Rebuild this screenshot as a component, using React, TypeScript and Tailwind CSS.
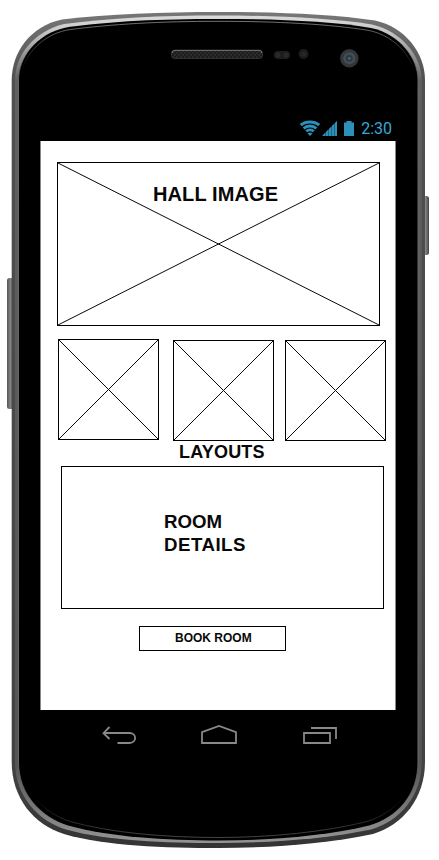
import React from "react";

const OUTER =
  "M11.7 80C11.7 53 30 26 62 19.5C110 14 160 12 219 12C275 12 330 14 375 20.5C405 27 425 53 425 80V762C425 798 403 825 373 834C325 844 270 848 219 848C165 848 105 846 64 834C34 825 11.7 798 11.7 762Z";
const RIM =
  "M15 80C15 55 34 31.5 64 24C110 18 160 15.5 219 15.5C275 15.5 330 18 372 24.5C401 31 421.7 56 421.7 80V762C421.7 796 400 821 371 829.5C325 839 270 843 219 843C165 843 108 841 66 829.5C38 821 15 796 15 762Z";
const FACE =
  "M18.5 80C18.5 58 36 34 66 27.5C112 21 160 19 219 19C275 19 330 21 371 28C400 34 418 59 418 80V762C418 794 398 817 369 825.5C325 836 270 840.5 219 840.5C165 840.5 110 837 68 825.5C41 817 18.5 794 18.5 762Z";

function PhoneBody() {
  return (
    <svg className="absolute inset-0" width="439" height="860" viewBox="0 0 439 860" fill="none" aria-hidden="true">
      <defs>
        <linearGradient id="shell" x1="0" y1="12" x2="0" y2="848" gradientUnits="userSpaceOnUse">
          <stop offset="0" stopColor="#777" />
          <stop offset="0.08" stopColor="#505050" />
          <stop offset="0.9" stopColor="#424242" />
          <stop offset="1" stopColor="#343434" />
        </linearGradient>
        <linearGradient id="rim" x1="0" y1="14" x2="0" y2="848" gradientUnits="userSpaceOnUse">
          <stop offset="0" stopColor="#dedede" />
          <stop offset="0.02" stopColor="#c8c8c8" />
          <stop offset="0.08" stopColor="#606060" />
          <stop offset="0.9" stopColor="#555" />
          <stop offset="1" stopColor="#999" />
        </linearGradient>
        <linearGradient id="line" x1="0" y1="19" x2="0" y2="845" gradientUnits="userSpaceOnUse">
          <stop offset="0" stopColor="#777" />
          <stop offset="0.02" stopColor="#555" />
          <stop offset="0.06" stopColor="#000" />
          <stop offset="0.94" stopColor="#000" />
          <stop offset="1" stopColor="#505050" />
        </linearGradient>
        <linearGradient id="edge" x1="0" y1="19" x2="0" y2="841" gradientUnits="userSpaceOnUse">
          <stop offset="0.02" stopColor="#686868" stopOpacity="0" />
          <stop offset="0.08" stopColor="#686868" />
          <stop offset="0.9" stopColor="#686868" />
          <stop offset="0.98" stopColor="#686868" stopOpacity="0" />
        </linearGradient>
        <linearGradient id="key" x1="0" y1="0" x2="1" y2="0">
          <stop offset="0" stopColor="#555" />
          <stop offset="0.5" stopColor="#858585" />
          <stop offset="1" stopColor="#444" />
        </linearGradient>
        <pattern id="mesh" width="4" height="4" patternUnits="userSpaceOnUse">
          <rect width="4" height="4" fill="#1d1d1d" />
          <circle cx="1" cy="1" r="0.8" fill="#3b3b3b" />
          <circle cx="3" cy="3" r="0.8" fill="#3b3b3b" />
        </pattern>
      </defs>
      <rect x="7" y="278" width="7" height="131" rx="2.5" fill="url(#key)" />
      <rect x="422" y="196" width="7" height="59" rx="2.5" fill="url(#key)" />
      <path d={OUTER} fill="url(#shell)" />
      <path d={RIM} fill="url(#rim)" />
      <path d={FACE} fill="#000" />
      <path
        d="M21 80C21 59 39 36 67 30C112 24 160 21.3 219 21.3C275 21.3 330 24 369 30.5C397 36 415.5 61 415.5 80V762C415.5 790 395 813 367 821.5C325 832 270 837.5 219 837.5C165 837.5 112 833 70 821.5C44 813 21 790 21 762Z"
        stroke="url(#line)"
      />
      <path d={FACE} stroke="url(#edge)" />
      <rect x="171.5" y="50.5" width="91" height="8" rx="3" fill="url(#mesh)" stroke="#333" />
      <path d="M172 53Q172 50.3 175 50.3H259Q262 50.3 262 53" stroke="#777" />
      <rect x="274" y="51" width="16" height="8" rx="4" fill="#1d1d1d" />
      <circle cx="278" cy="55" r="2.6" fill="#292929" />
      <circle cx="286" cy="55" r="2.6" fill="#292929" />
      <circle cx="303.5" cy="54" r="5" fill="#1c1c1c" />
      <circle cx="303.5" cy="54" r="2.5" fill="#272727" />
      <circle cx="349.3" cy="58.3" r="9.2" fill="#32373a" />
      <circle cx="349.3" cy="58.3" r="6" fill="#454e54" />
      <circle cx="349.3" cy="58.3" r="3.5" fill="#2b3943" />
      <circle cx="349.3" cy="58.3" r="1.5" fill="#496070" />
    </svg>
  );
}

function StatusBar() {
  return (
    <header className="flex h-[26px] items-start justify-end pr-[4px] text-[#2e8fb8]">
      <svg className="mt-[5px]" width="20" height="17" viewBox="0 0 20 17" fill="none" stroke="currentColor" aria-hidden="true">
        <path d="M.9 5.2C5.5 .9 14.5 .9 19.1 5.2" strokeWidth="3.2" />
        <path d="M3.6 8.5C7 5.2 13 5.2 16.4 8.5" strokeWidth="2.9" />
        <path d="M6.2 11.4C8.2 9.4 11.8 9.4 13.8 11.4" strokeWidth="2.6" />
        <path d="M7.5 13.5Q10 11.6 12.5 13.5L10 16Z" fill="currentColor" stroke="none" />
      </svg>
      <svg className="ml-[2px] mt-[6px]" width="15" height="15" viewBox="0 0 15 15" aria-hidden="true">
        <path d="M0 15L15 0V15Z" fill="#1c6585" />
        <path d="M13 2L15 0V15H13ZM10 5L12 3V15H10ZM7 8L9 6V15H7ZM4 11L6 9V15H4ZM1 14L3 12V15H1Z" fill="currentColor" />
      </svg>
      <svg className="ml-[7px] mt-[6px]" width="10" height="15" viewBox="0 0 10 15" fill="currentColor" aria-hidden="true">
        <path d="M2.5 0H7.5V1.5H10V15H0V1.5H2.5Z" />
      </svg>
      <time className="ml-[7px] mt-[4px] font-[Roboto,sans-serif] text-[16px] leading-[20px] text-[#36a9d8]">2:30</time>
    </header>
  );
}

function Placeholder({ className, children }: { className: string; children?: React.ReactNode }) {
  return (
    <div className={`relative border border-black ${className}`}>
      <svg className="absolute inset-0 h-full w-full" viewBox="0 0 100 100" preserveAspectRatio="none" aria-hidden="true">
        <path d="M0 0L100 100M100 0L0 100" stroke="currentColor" vectorEffect="non-scaling-stroke" />
      </svg>
      {children}
    </div>
  );
}

function NavBar() {
  return (
    <nav className="flex h-[50px] items-start pl-[62px] pt-[14px]">
      <button aria-label="Back">
        <svg className="block" width="35" height="22" viewBox="0 0 35 22" fill="none" stroke="#888" strokeWidth="1.8">
          <path d="M7.5 3L1.5 9.2L7.5 15M2 9H27.5C35 9 35 19 27.5 19H15.5" />
        </svg>
      </button>
      <button aria-label="Home" className="ml-[63px]">
        <svg className="block" width="38" height="22" viewBox="0 0 38 22" fill="none" stroke="#888" strokeWidth="1.8">
          <path d="M2 8.2L19 1.9L36 8.2V19H2Z" />
        </svg>
      </button>
      <button aria-label="Recent apps" className="ml-[64px]">
        <svg className="block" width="36" height="22" viewBox="0 0 36 22" fill="none" stroke="#888" strokeWidth="1.8">
          <path d="M2 9H28V19H2ZM9 4H34V15" />
        </svg>
      </button>
    </nav>
  );
}

export default function App() {
  return (
    <div className="relative h-[860px] w-[439px] overflow-hidden bg-white font-['Liberation_Sans',sans-serif] text-[#080808]">
      <PhoneBody />
      <div className="relative ml-[40px] w-[356px] pt-[115px]">
        <StatusBar />
        <main className="h-[569px] border-x border-[#888] bg-white pl-[16px] pt-[21px] font-bold">
          <Placeholder className="h-[164px] w-[323px]">
            <h1 className="relative ml-[95px] mt-[19px] w-max text-[20px] leading-[24px] tracking-[0.1px]">HALL IMAGE</h1>
          </Placeholder>
          <div className="ml-px mt-[13px] flex h-[102px] items-end">
            <Placeholder className="mb-px h-[101px] w-[101px] shrink-0" />
            <Placeholder className="ml-[14px] h-[101px] w-[101px] shrink-0" />
            <Placeholder className="ml-[11px] h-[101px] w-[101px] shrink-0" />
          </div>
          <h2 className="ml-[122px] h-[25px] pt-px text-[18px] leading-[20px] tracking-[0.2px]">LAYOUTS</h2>
          <section className="ml-[4px] h-[143px] w-[323px] border border-black pl-[102px] pt-[43px]">
            <h2 className="w-[90px] text-[18.67px] leading-[23px]">
              ROOM <span className="tracking-[0.5px]">DETAILS</span>
            </h2>
          </section>
          <button className="ml-[82px] mt-[17px] flex h-[25px] w-[147px] items-center border border-black pb-px pl-[35px] text-[12px] leading-[16px]">
            BOOK ROOM
          </button>
        </main>
        <NavBar />
      </div>
    </div>
  );
}
